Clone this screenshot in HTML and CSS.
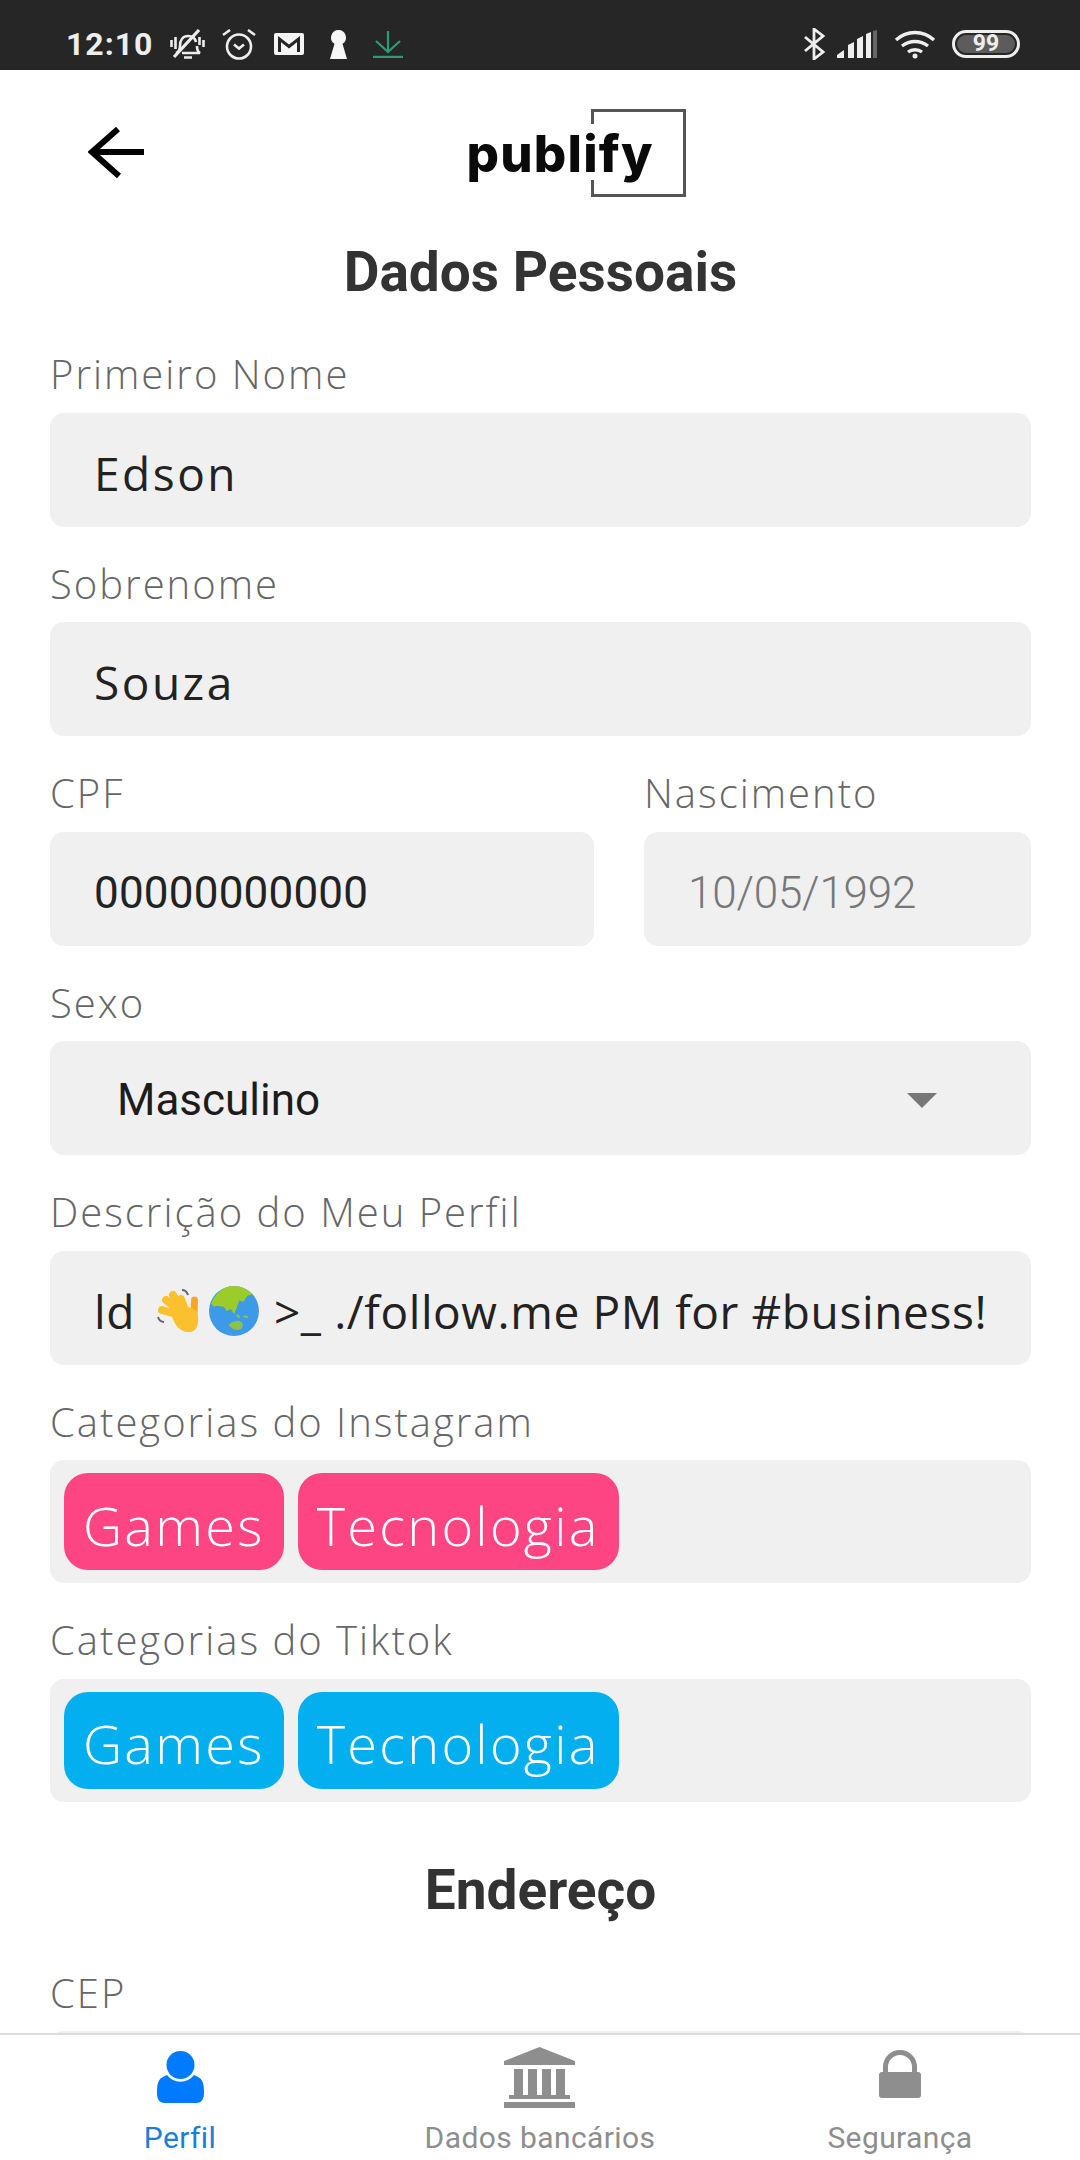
FILE: index.html
```html
<!DOCTYPE html>
<html lang="pt-BR">
<head>
    <meta charset="UTF-8">
    <meta name="viewport" content="width=device-width, initial-scale=1.0">
    <title>Publify - Dados Pessoais</title>
    <link rel="stylesheet" href="styles.css">
</head>
<body>
    <div class="statusBar">
        <div class="statusLeft">
            <span class="clock">12:10</span>
            <!-- sino silenciado -->
            <svg class="icoBell" viewBox="0 0 35 30" fill="none" stroke="#eee" stroke-width="2.600">
                <path d="M6 24c3-1 4-3 4-7 0-6 3-10 8-10 4 0 7 2 8 6M27 17c0 3 1 6 3 7H12"/>
                <path d="M14 28.500h8" stroke-width="2.500"/>
                <path d="M1.500 11v7M5.500 8v12M29.500 8v8M33.500 11v7"/>
                <path d="M4 28L29 1" stroke-width="3.200"/>
            </svg>
            <!-- alarme -->
            <svg class="icoAlarm" viewBox="0 0 34 31" fill="none" stroke="#eee" stroke-width="2.600">
                <circle cx="17" cy="17.500" r="12"/>
                <path d="M12 15.500l5 4 5-4"/>
                <path d="M1 6l7-5M33 6l-7-5"/>
            </svg>
            <!-- gmail -->
            <svg class="icoMail" viewBox="0 0 30 22">
                <rect width="30" height="22" rx="2" fill="#f5f5f5"/>
                <path d="M5.500 19V6l9.500 7.500L24.500 6v13" fill="none" stroke="#262626" stroke-width="3"/>
            </svg>
            <!-- fechadura -->
            <svg class="icoKey" viewBox="0 0 17 29">
                <path d="M8.500 0a7.500 7.500 0 0 1 4 13.800L17 29H0l4.500-15.200A7.500 7.500 0 0 1 8.500 0z" fill="#f7f7f7"/>
            </svg>
            <!-- download -->
            <svg class="icoDown" viewBox="0 0 30 27" fill="none" stroke="#2f9a76" stroke-width="2.200">
                <path d="M15 0v21M3 10l12 11 12-11"/>
                <path d="M0 26h30" stroke-width="2.400"/>
            </svg>
        </div>
        <div class="statusRight">
            <svg class="icoBt" viewBox="0 0 22 32" fill="none" stroke="#eee" stroke-width="2.800">
                <path d="M2 9l18 15-9 7V1l9 7L2 23"/>
            </svg>
            <svg class="icoSignal" viewBox="0 0 41 28">
                <path d="M0 28v-3l7-5v8zM11 28V15l6-3v16zM20 28V9l6-3v22zM29 28V4l5-2v26z" fill="#eee"/>
                <path d="M36 28V1l4-1v28z" fill="#666"/>
            </svg>
            <svg class="icoWifi" viewBox="0 0 42 29" fill="none" stroke="#eee" stroke-width="3.400">
                <path d="M2 10c11-10 27-10 38 0"/>
                <path d="M8 16c8-6 18-6 26 0"/>
                <path d="M14 22c4-3 10-3 14 0"/>
                <circle cx="21" cy="26" r="2.500" fill="#eee" stroke="none"/>
            </svg>
            <div class="battery"><span class="batteryFill">99</span></div>
        </div>
    </div>

    <div class="content">
        <div class="topBar">
            <svg class="backBtn" viewBox="0 0 56 52" fill="none" stroke="#000" stroke-width="6">
                <path d="M56 25H4"/>
                <path d="M30 2L4 25l27 24"/>
            </svg>
            <div class="logo">
                <span class="logoText">publify</span>
                <svg class="logoBox" viewBox="0 0 95 88" fill="none" stroke="#555" stroke-width="3">
                    <path d="M1.500 15V1.500h92v85h-92V71"/>
                </svg>
            </div>
        </div>

        <h1 class="title">Dados Pessoais</h1>

        <div class="field">
            <label class="fieldLabel">Primeiro Nome</label>
            <div class="box">Edson</div>
        </div>
        <div class="field">
            <label class="fieldLabel">Sobrenome</label>
            <div class="box">Souza</div>
        </div>

        <div class="fieldRow">
            <div class="field cpfField">
                <label class="fieldLabel">CPF</label>
                <div class="box numBox">00000000000</div>
            </div>
            <div class="field dateField">
                <label class="fieldLabel">Nascimento</label>
                <div class="box numBox disabled">10/05/1992</div>
            </div>
        </div>

        <div class="field">
            <label class="fieldLabel">Sexo</label>
            <div class="box selectBox">
                <span>Masculino</span>
                <span class="caret"></span>
            </div>
        </div>

        <div class="field">
            <label class="fieldLabel">Descrição do Meu Perfil</label>
            <div class="box bioBox">
                <span>ld</span>
                <!-- mao acenando -->
                <svg class="emojiHand" viewBox="0 0 45 44">
                    <g fill="none" stroke="#fbc02d" stroke-width="8" stroke-linecap="round">
                        <path d="M27 27L6 21M27 25L10 11M28 24L17 6M30 24L25 10"/>
                        <path d="M38 27L38.500 11" stroke="#f9a825" stroke-width="7"/>
                    </g>
                    <path d="M16 28c0-12 25-14 26-1 1 9-2 17-10 16-8 0-13-7-16-15z" fill="#fbc02d"/>
                    <path d="M26 1c3 0 5 2 6 5M2 28c1 3 3 5 6 5" fill="none" stroke="#666" stroke-width="2"/>
                </svg>
                <!-- globo -->
                <svg class="emojiGlobe" viewBox="0 0 48 48">
                    <circle cx="24" cy="24" r="24" fill="#3d9ae8"/>
                    <path d="M2 17C6 7 14 0 24 0c7 0 13 3 18 8l-5 1-4 6-4-1-2 6-3 7-3-5-4 2-3-4-7-1-2 1z" fill="#9ccc2a"/>
                    <path d="M19 37c2-3 8-4 11-3 3 1 3 5 1 7-3 2-6 1-8 0-2-1-4-2-4-4zM26 27l3 1 1 3-3-1zM33 28l5 1-1 2-4-1z" fill="#8bc34a"/>
                </svg>
                <span>&gt;_ ./follow.me PM for #business!</span>
            </div>
        </div>

        <div class="field">
            <label class="fieldLabel">Categorias do Instagram</label>
            <div class="tagBox">
                <span class="tag pink">Games</span>
                <span class="tag pink">Tecnologia</span>
            </div>
        </div>
        <div class="field">
            <label class="fieldLabel">Categorias do Tiktok</label>
            <div class="tagBox">
                <span class="tag blue">Games</span>
                <span class="tag blue">Tecnologia</span>
            </div>
        </div>

        <h2 class="title addrTitle">Endereço</h2>

        <div class="field">
            <label class="fieldLabel">CEP</label>
            <div class="box"></div>
        </div>
    </div>

    <nav class="tabBar">
        <div class="tab active">
            <div class="tabIco">
                <svg class="icoUser" viewBox="0 0 47 52" fill="#007aff">
                    <circle cx="23.500" cy="14" r="14"/>
                    <path d="M0 42c0-12 2-15 10-18a16.800 16.800 0 0 0 27 0c8 3 10 6 10 18 0 7-3 10-8 10H8c-5 0-8-3-8-10z"/>
                </svg>
            </div>
            <span>Perfil</span>
        </div>
        <div class="tab">
            <div class="tabIco">
                <svg class="icoBank" viewBox="0 0 71 61" fill="#8e8e8e">
                    <path d="M35.500 0L71 14v4H0v-4z"/>
                    <path d="M10 22h9v27h-9zM24 22h9v27h-9zM38 22h9v27h-9zM52 22h9v27h-9z"/>
                    <path d="M5 48h61v4H5zM0 55h71v6H0z"/>
                </svg>
            </div>
            <span>Dados bancários</span>
        </div>
        <div class="tab">
            <div class="tabIco">
                <svg class="icoLock" viewBox="0 0 42 48">
                    <path d="M6.500 24V17a14.500 14.500 0 0 1 29 0v7" fill="none" stroke="#8e8e8e" stroke-width="5"/>
                    <rect y="22" width="42" height="26" rx="3" fill="#8e8e8e"/>
                </svg>
            </div>
            <span>Segurança</span>
        </div>
    </nav>
</body>
</html>
```

FILE: styles.css
```css
*{
    box-sizing: border-box;
}
body{
    margin: 0;
    width: 1080px;
    height: 2160px;
    display: flex;
    flex-direction: column;
    overflow: hidden;
    background: #fff;
    font-family: "Open Sans", "Noto Sans", sans-serif;
}

/* barra de status */
.statusBar{
    height: 70px;
    flex-shrink: 0;
    background: #262626;
    display: flex;
    justify-content: space-between;
    align-items: center;
    padding: 18px 60px 0 66px;
}
.statusLeft, .statusRight{
    display: flex;
    align-items: center;
}
.clock{
    font-family: "Roboto", sans-serif;
    font-weight: 700;
    font-size: 32px;
    letter-spacing: 1px;
    color: #eee;
    margin-right: 17px;
}
.icoBell{ width: 35px; height: 30px; margin-right: 17px; }
.icoAlarm{ width: 34px; height: 31px; margin-right: 18px; }
.icoMail{ width: 30px; height: 22px; margin-right: 26px; }
.icoKey{ width: 17px; height: 29px; margin-right: 26px; }
.icoDown{ width: 30px; height: 27px; }
.icoBt{ width: 22px; height: 32px; margin-right: 12px; }
.icoSignal{ width: 41px; height: 28px; margin-right: 16px; }
.icoWifi{ width: 42px; height: 29px; margin-right: 16px; }
.battery{
    width: 68px;
    height: 28px;
    border: 3px solid #eee;
    border-radius: 14px;
    padding: 2px;
    display: flex;
}
.batteryFill{
    flex: 1;
    background: #5c5c5c;
    border-radius: 10px;
    color: #eee;
    font-family: "Roboto", sans-serif;
    font-weight: 700;
    font-size: 23px;
    line-height: 18px;
    text-align: center;
}

/* conteudo */
.content{
    flex: 1;
    min-height: 0;
    overflow: hidden;
    padding: 0 49px 0 50px;
}
.topBar{
    height: 166px;
    display: flex;
    align-items: center;
    justify-content: center;
    position: relative;
}
.backBtn{
    position: absolute;
    left: 38px;
    top: 57px;
    width: 56px;
    height: 52px;
}
.logo{
    width: 219px;
    height: 88px;
    margin-left: 71px;
    display: flex;
    align-items: center;
    position: relative;
}
.logoText{
    font-family: "Inter", sans-serif;
    font-weight: 800;
    font-size: 51px;
    letter-spacing: 1.2px;
    color: #0a0a0a;
}
.logoBox{
    position: absolute;
    right: 0;
    top: 0;
    width: 95px;
    height: 88px;
}
.title{
    margin: 0;
    font-family: "Roboto", sans-serif;
    font-weight: 700;
    font-size: 55px;
    line-height: 72px;
    color: #333;
    text-align: center;
}
.addrTitle{
    margin-top: 52px;
}
.field{
    padding-top: 32px;
}
.title + .field{
    padding-top: 41px;
}
.addrTitle + .field{
    padding-top: 42px;
}
.fieldLabel{
    display: block;
    height: 50px;
    line-height: 50px;
    margin-bottom: 13.5px;
    font-size: 40px;
    font-weight: 300;
    letter-spacing: 2px;
    color: #666;
}
.box{
    height: 114px;
    background: #f0f0f0;
    border-radius: 14px;
    padding: 6px 44px 0;
    display: flex;
    align-items: center;
    font-size: 46px;
    letter-spacing: 2.5px;
    color: #222;
}
.fieldRow{
    display: flex;
    gap: 50px;
}
.cpfField{
    width: 544px;
}
.dateField{
    flex: 1;
}
.numBox{
    font-family: "Roboto", sans-serif;
    font-size: 44px;
    padding-top: 8px;
    letter-spacing: 0.2px;
}
.disabled{
    font-weight: 300;
    letter-spacing: -0.2px;
    color: #777;
}
.selectBox{
    font-family: "Roboto", sans-serif;
    font-size: 44px;
    letter-spacing: 0;
    padding: 4px 94px 0 67px;
    justify-content: space-between;
    color: #1c1c1c;
}
.caret{
    width: 0;
    height: 0;
    border-left: 15px solid transparent;
    border-right: 15px solid transparent;
    border-top: 15px solid #777;
}
.bioBox{
    white-space: nowrap;
    letter-spacing: 0.6px;
    padding-right: 0;
}
.emojiHand{
    width: 45px;
    height: 44px;
    margin-left: 21px;
    flex-shrink: 0;
}
.emojiGlobe{
    width: 50px;
    height: 50px;
    margin-left: 8px;
    margin-right: 15px;
    flex-shrink: 0;
}
.tagBox{
    height: 123px;
    background: #f0f0f0;
    border-radius: 14px;
    padding: 13px 14px;
    display: flex;
    gap: 14px;
}
.tag{
    height: 97px;
    border-radius: 24px;
    padding: 6px 19px 0;
    display: flex;
    align-items: center;
    font-size: 54px;
    font-weight: 300;
    letter-spacing: 2.3px;
    color: #fff;
}
.pink{
    background: #fd4584;
}
.blue{
    background: #03afef;
}

/* abas inferiores */
.tabBar{
    height: 127px;
    flex-shrink: 0;
    background: #fff;
    border-top: 2px solid #ddd;
    display: flex;
}
.tab{
    flex: 1;
    display: flex;
    flex-direction: column;
    align-items: center;
    justify-content: flex-end;
    font-family: "Roboto", sans-serif;
    font-size: 30px;
    letter-spacing: 0.4px;
    line-height: 36px;
    color: #8e8e8e;
    padding-bottom: 4px;
}
.tab.active{
    color: #1a7fd6;
}
.tabIco{
    height: 62px;
    margin-bottom: 12px;
    display: flex;
    align-items: center;
}
.icoUser{ width: 47px; height: 52px; }
.icoBank{ width: 71px; height: 61px; margin-right: 2px; }
.icoLock{ width: 42px; height: 48px; margin-bottom: 6px; }
```
